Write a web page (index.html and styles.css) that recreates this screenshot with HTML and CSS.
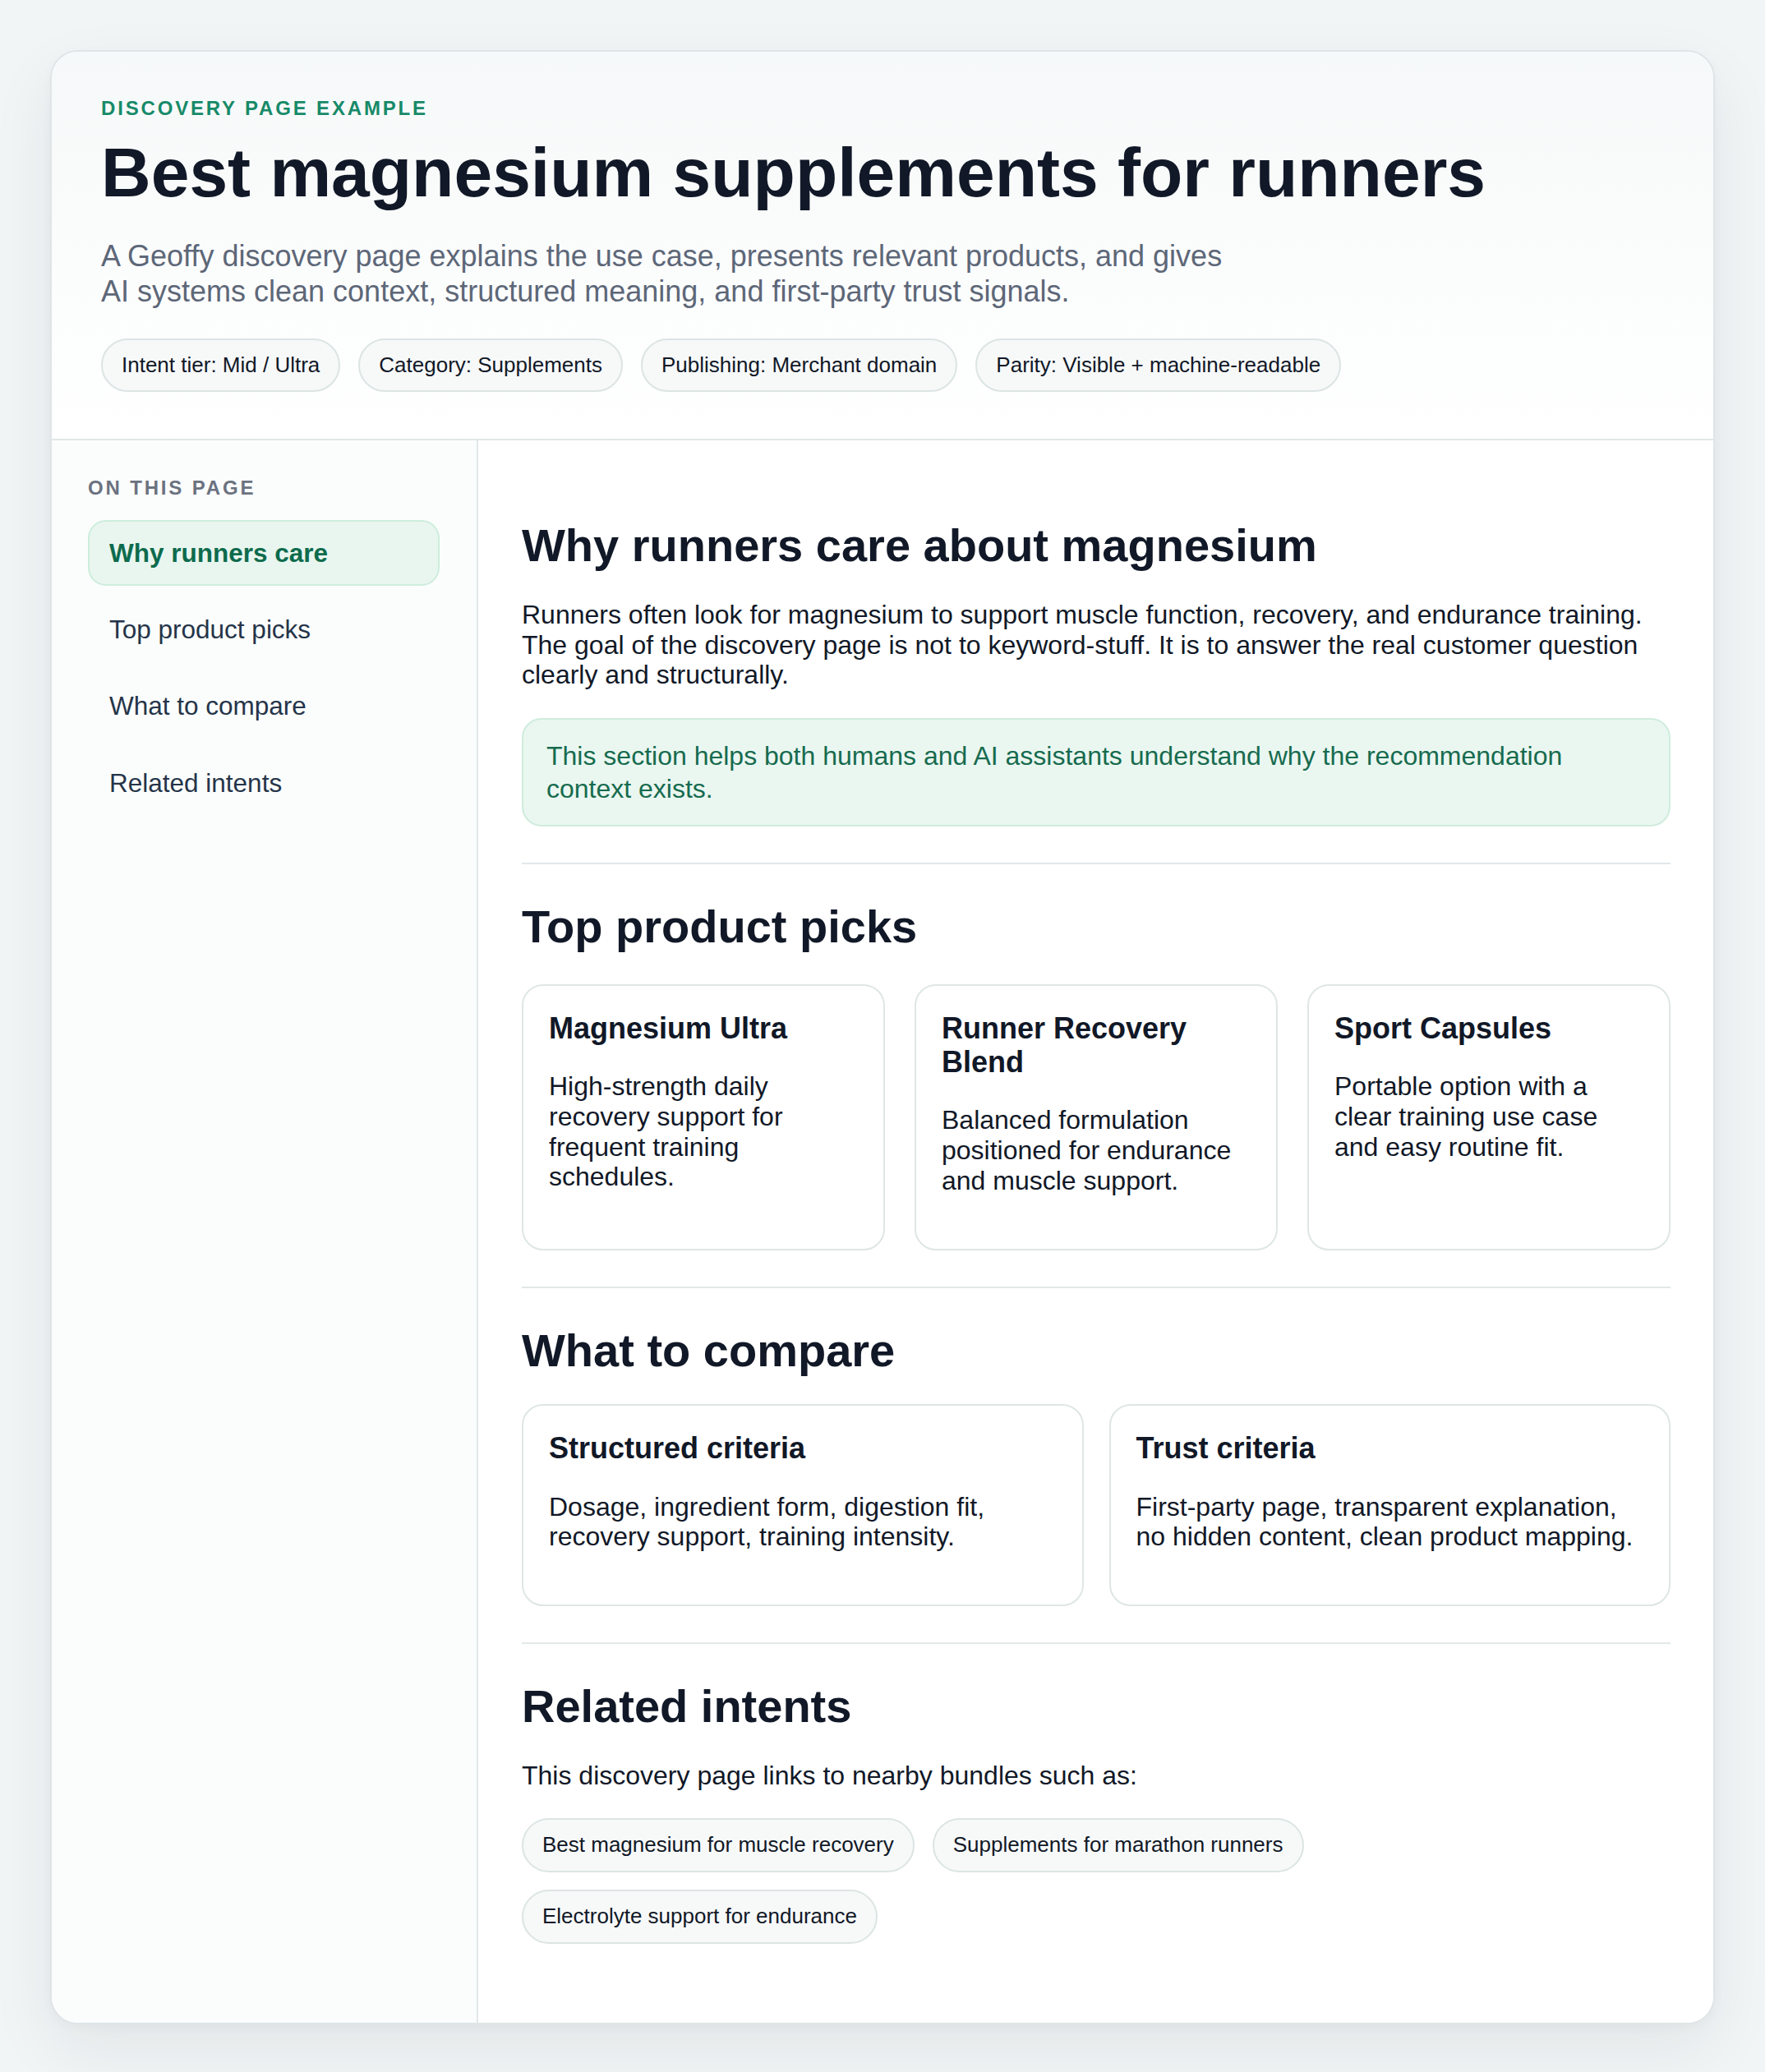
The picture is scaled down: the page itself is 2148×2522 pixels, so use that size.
FILE: index.html
```html
<!DOCTYPE html>
<html lang="en">
<head>
<meta charset="utf-8">
<title>Best magnesium supplements for runners</title>
<link rel="stylesheet" href="styles.css">
</head>
<body>
<div class="page">
  <article class="card">
    <header class="hero">
      <div class="eyebrow">DISCOVERY PAGE EXAMPLE</div>
      <h1 class="title">Best magnesium supplements for runners</h1>
      <p class="lead">A Geoffy discovery page explains the use case, presents relevant products, and gives AI systems clean context, structured meaning, and first-party trust signals.</p>
      <div class="chips">
        <span class="chip">Intent tier: Mid / Ultra</span>
        <span class="chip">Category: Supplements</span>
        <span class="chip">Publishing: Merchant domain</span>
        <span class="chip">Parity: Visible + machine-readable</span>
      </div>
    </header>
    <div class="body">
      <aside class="sidebar">
        <div class="side-label">ON THIS PAGE</div>
        <nav class="nav">
          <a class="nav-item active">Why runners care</a>
          <a class="nav-item">Top product picks</a>
          <a class="nav-item">What to compare</a>
          <a class="nav-item">Related intents</a>
        </nav>
      </aside>
      <main class="main">
        <section class="section">
          <h2 class="h2">Why runners care about magnesium</h2>
          <p class="text">Runners often look for magnesium to support muscle function, recovery, and endurance training. The goal of the discovery page is not to keyword-stuff. It is to answer the real customer question clearly and structurally.</p>
          <div class="callout">This section helps both humans and AI assistants understand why the recommendation context exists.</div>
        </section>
        <section class="section">
          <h2 class="h2">Top product picks</h2>
          <div class="grid grid-3">
            <div class="item">
              <h3 class="h3">Magnesium Ultra</h3>
              <p class="item-text">High-strength daily recovery support for frequent training schedules.</p>
            </div>
            <div class="item">
              <h3 class="h3">Runner Recovery Blend</h3>
              <p class="item-text">Balanced formulation positioned for endurance and muscle support.</p>
            </div>
            <div class="item">
              <h3 class="h3">Sport Capsules</h3>
              <p class="item-text">Portable option with a clear training use case and easy routine fit.</p>
            </div>
          </div>
        </section>
        <section class="section">
          <h2 class="h2">What to compare</h2>
          <div class="grid grid-2">
            <div class="item">
              <h3 class="h3">Structured criteria</h3>
              <p class="item-text">Dosage, ingredient form, digestion fit, recovery support, training intensity.</p>
            </div>
            <div class="item">
              <h3 class="h3">Trust criteria</h3>
              <p class="item-text">First-party page, transparent explanation, no hidden content, clean product mapping.</p>
            </div>
          </div>
        </section>
        <section class="section last">
          <h2 class="h2">Related intents</h2>
          <p class="text">This discovery page links to nearby bundles such as:</p>
          <div class="chips related">
            <span class="chip">Best magnesium for muscle recovery</span>
            <span class="chip">Supplements for marathon runners</span>
            <span class="chip">Electrolyte support for endurance</span>
          </div>
        </section>
      </main>
    </div>
  </article>
</div>
</body>
</html>
```

FILE: styles.css
```css
* { box-sizing: border-box; }

html, body {
  margin: 0;
  padding: 0;
}

body {
  font-family: "Liberation Sans", Arial, Helvetica, sans-serif;
  background: #f2f5f6;
  color: #111827;
}

.page {
  padding: 61px 61px 60px;
}

.card {
  background: #ffffff;
  border: 2px solid #dfe5e7;
  border-radius: 34px;
  overflow: hidden;
  box-shadow: 0 30px 80px rgba(15, 23, 42, 0.07), 0 4px 14px rgba(15, 23, 42, 0.03);
}

.hero {
  padding: 55px 60px 57px;
  background: linear-gradient(180deg, #f6f9f9 0%, #ffffff 100%);
  border-bottom: 2px solid #e1e7e8;
}

.eyebrow {
  font-size: 24px;
  line-height: 1.15;
  font-weight: 700;
  letter-spacing: 0.118em;
  color: #178a69;
}

.title {
  margin: 16px 0 0;
  font-size: 84px;
  line-height: 1.15;
  font-weight: 700;
  color: #111827;
}

.lead {
  margin: 32px 0 0;
  max-width: 1380px;
  font-size: 36px;
  line-height: 1.2;
  color: #5d6778;
}

.chips {
  display: flex;
  flex-wrap: wrap;
  gap: 21px 22px;
  margin-top: 35px;
}

.chip {
  display: inline-block;
  padding: 16px 23px;
  font-size: 26px;
  line-height: 1.15;
  color: #111827;
  background: #f7f9f9;
  border: 2px solid #dce4e4;
  border-radius: 999px;
  white-space: nowrap;
}

.body {
  display: grid;
  grid-template-columns: 519px 1fr;
}

.sidebar {
  background: #fbfdfc;
  border-right: 2px solid #e1e7e8;
  padding: 44px 45px 40px 44px;
}

.side-label {
  font-size: 24px;
  line-height: 1.15;
  font-weight: 700;
  letter-spacing: 0.118em;
  color: #6b7280;
}

.nav {
  display: flex;
  flex-direction: column;
  gap: 13px;
  margin-top: 25px;
}

.nav-item {
  display: block;
  padding: 20px 24px;
  font-size: 31.5px;
  line-height: 1.15;
  color: #253449;
  border: 2px solid transparent;
  border-radius: 22px;
  text-decoration: none;
}

.nav-item.active {
  background: #e9f6ef;
  border-color: #cdeddc;
  color: #0d6b4d;
  font-weight: 700;
}

.main {
  padding: 52px 52px 52px 53px;
  background: #ffffff;
}

.section {
  display: flex;
  flex-direction: column;
  padding: 44px 0;
  border-bottom: 2px solid #e3e8e9;
}

.section.last {
  border-bottom: none;
}

.h2 {
  margin: 0 0 33px;
  font-size: 56px;
  line-height: 1.15;
  font-weight: 700;
  color: #111827;
}

.text {
  margin: 0;
  font-size: 32px;
  line-height: 1.15;
  color: #111827;
}

.callout {
  margin-top: 34px;
  padding: 24px 28px;
  font-size: 32px;
  line-height: 40px;
  color: #176b4f;
  background: #eaf7f0;
  border: 2px solid #cfecdd;
  border-radius: 24px;
}

.grid {
  display: grid;
}

.grid-3 {
  grid-template-columns: repeat(3, 1fr);
  gap: 36px;
  margin-top: 4px;
}

.grid-2 {
  grid-template-columns: repeat(2, 1fr);
  gap: 31px;
}

.item {
  padding: 31px 31px 64px;
  background: #ffffff;
  border: 2px solid #dfe6e6;
  border-radius: 26px;
}

.h3 {
  margin: 0 0 32px;
  font-size: 36px;
  line-height: 1.15;
  font-weight: 700;
  color: #111827;
}

.item-text {
  margin: 0;
  font-size: 32px;
  line-height: 1.15;
  color: #111827;
}

.chips.related {
  margin-top: 34px;
}
```
